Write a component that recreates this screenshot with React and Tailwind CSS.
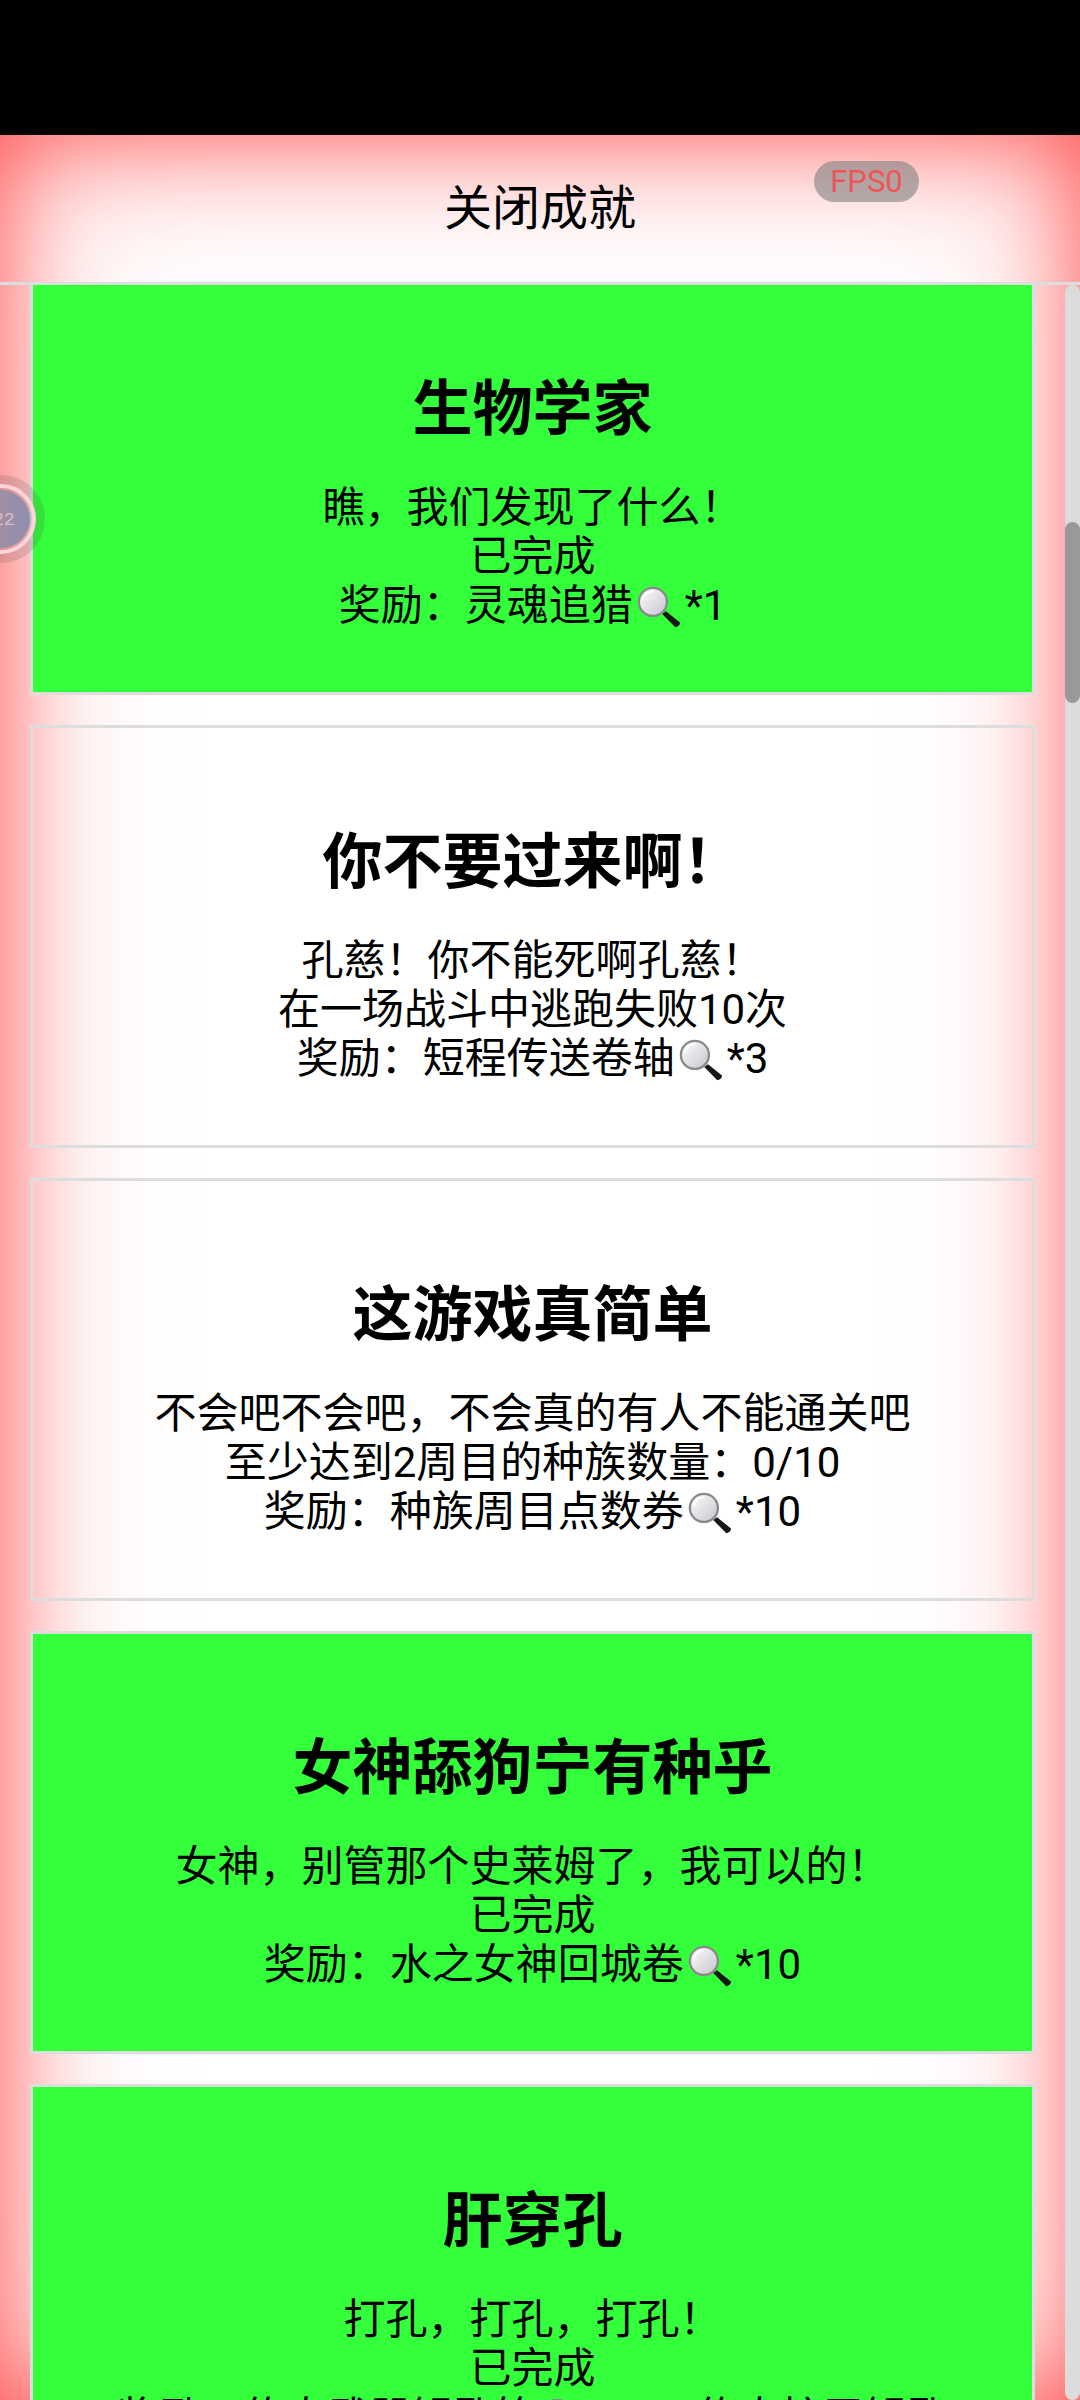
const FONT = "font-['Roboto','Noto_Sans_CJK_SC',sans-serif]";

const cards = [
  { title: "生物学家", quote: "瞧，我们发现了什么！", progress: "已完成", reward: "奖励：灵魂追猎", suffix: "*1", done: true },
  { title: "你不要过来啊！", quote: "孔慈！你不能死啊孔慈！", progress: "在一场战斗中逃跑失败10次", reward: "奖励：短程传送卷轴", suffix: "*3", done: false },
  { title: "这游戏真简单", quote: "不会吧不会吧，不会真的有人不能通关吧", progress: "至少达到2周目的种族数量：0/10", reward: "奖励：种族周目点数券", suffix: "*10", done: false },
  { title: "女神舔狗宁有种乎", quote: "女神，别管那个史莱姆了，我可以的！", progress: "已完成", reward: "奖励：水之女神回城卷", suffix: "*10", done: true },
  { title: "肝穿孔", quote: "打孔，打孔，打孔！", progress: "已完成", reward: "奖励：传奇武器钥匙箱", suffix: "*10，传奇护甲钥匙", done: true },
];

// the 🔍 emoji, no colour emoji font is installed
function Magnifier() {
  return (
    <span className="inline-block w-[52px] h-[42px] align-[-5px] text-center">
      <svg width="47" height="43" viewBox="0 0 48 46" className="inline-block align-top">
        <defs>
          <linearGradient id="glass" x1="0" y1="0" x2="1" y2="1">
            <stop offset="0" stopColor="#ffffff" />
            <stop offset="1" stopColor="#c4c4cc" />
          </linearGradient>
        </defs>
        <path d="M28 30 L32 27 L47 39 Q47 43 42 44 Z" fill="#161616" />
        <circle cx="18" cy="17" r="15" fill="url(#glass)" stroke="#8a8a8a" strokeWidth="2.5" />
        <path d="M7 15 A11.5 11.5 0 0 1 18 5.5" fill="none" stroke="#ffffff" strokeWidth="2" />
      </svg>
    </span>
  );
}

function Card({ title, quote, progress, reward, suffix, done }) {
  return (
    <div
      className={`w-[1005px] h-[423px] shrink-0 mb-[30px] border-[3px] border-[#dddddd] pt-[100px] text-center text-black ${
        done ? "bg-[#33ff3b]" : ""
      }`}
    >
      <h2 className="text-[60px] leading-[70px] font-bold mb-[38px]">{title}</h2>
      <p className="text-[42px] leading-[49px]">{quote}</p>
      <p className="text-[42px] leading-[49px]">{progress}</p>
      <p className="text-[42px] leading-[49px] whitespace-nowrap">
        {reward}
        <Magnifier />
        {suffix}
      </p>
    </div>
  );
}

export default function App() {
  return (
    <div className={`relative w-[1080px] h-[2400px] flex flex-col bg-black overflow-hidden ${FONT}`}>
      <div className="h-[135px] shrink-0" />

      <div className="relative flex-1 min-h-0 flex flex-col bg-white shadow-[inset_0_0_100px_rgba(255,0,0,0.62),inset_0_0_200px_rgba(255,0,0,0.22)]">
        <header className="relative h-[150px] shrink-0 border-b-[3px] border-[#dddddd] flex items-center justify-center">
          <span className="text-[48px] leading-none text-black">关闭成就</span>
          <span className="absolute left-[814px] top-[26px] w-[105px] h-[41px] rounded-[21px] bg-[#80808099] flex items-center justify-center text-[31px] leading-none text-[#ee5555]">
            FPS0
          </span>
        </header>

        <div className="flex-1 min-h-0 overflow-hidden pl-[30px]">
          <div className="-mt-[13px]">
            {cards.map((c) => (
              <Card key={c.title} {...c} />
            ))}
          </div>
        </div>

        {/* scrollbar */}
        <div className="absolute right-0 top-[150px] bottom-0 w-[15px] rounded-full bg-[#dcdcdc]">
          <div className="absolute left-0 top-[237px] w-[15px] h-[181px] rounded-full bg-[#999999]" />
        </div>
      </div>

      {/* floating ball */}
      <svg width="46" height="90" viewBox="0 0 46 90" className="absolute left-0 top-[474px]">
        <defs>
          <linearGradient id="ball" x1="0" y1="0" x2="1" y2="0">
            <stop offset="0" stopColor="#b08f98" />
            <stop offset="1" stopColor="#8f8eb0" />
          </linearGradient>
        </defs>
        <circle cx="1" cy="45" r="44" fill="rgba(80,80,80,0.18)" />
        <circle cx="1" cy="45" r="33" fill="none" stroke="#ffd3da" strokeWidth="4" />
        <circle cx="1" cy="45" r="29" fill="url(#ball)" />
        <text x="-7" y="51" fontSize="18" fill="#e3bcc6" fontFamily="'Liberation Mono', monospace">
          22
        </text>
      </svg>
    </div>
  );
}
